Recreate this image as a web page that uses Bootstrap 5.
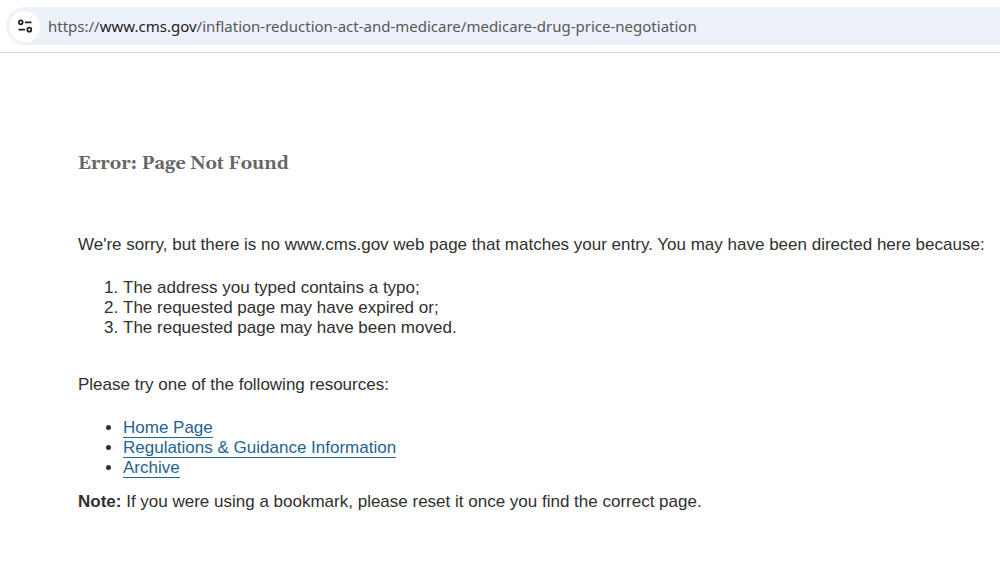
<!DOCTYPE html>
<html lang="en">
<head>
<meta charset="utf-8">
<meta name="viewport" content="width=device-width, initial-scale=1">
<title>Error: Page Not Found</title>
<link href="https://cdn.jsdelivr.net/npm/bootstrap@5.3.0/dist/css/bootstrap.min.css" rel="stylesheet">
<style>
body { font-family: "Liberation Sans", Arial, sans-serif; font-size: 17px; line-height: 20px; color: #303030; background: #fff; }
.browser-bar { padding: 7px 0 7px 6px; border-bottom: 1px solid #d8d9db; }
.address { background: #edf1fa; border-radius: 19px 0 0 19px; height: 38px; padding-left: 3px; }
.site-info { width: 31px; height: 31px; background: #fff; border: 0; }
.url { font-family: "Noto Sans", "Segoe UI", sans-serif; font-size: 15px; color: #55585c; padding-left: 8px; }
.url b { font-weight: 400; color: #1f2023; }
.message { padding: 101px 0 0 78px; }
.message h1 { font-family: Gelasio, Georgia, "DejaVu Serif", serif; font-size: 18px; line-height: 20px; font-weight: 700; color: #666; margin-bottom: 61px; }
.message p { margin-bottom: 23px; }
.message ol, .message ul { padding-left: 45px; }
.message ol { margin-bottom: 37px; }
.message ul { margin-bottom: 14px; }
.message a { color: #1f6391; text-decoration: none; border-bottom: 1px solid #1f6391; }
</style>
</head>
<body>
<header class="browser-bar">
  <div class="address d-flex align-items-center">
    <button class="site-info rounded-circle p-0 d-flex align-items-center justify-content-center" type="button" aria-label="View site information">
      <svg width="16" height="16" viewBox="0 0 16 16" fill="none" stroke="#1f2023" stroke-width="1.7"><circle cx="3.7" cy="4.3" r="2"/><path d="M8 4.3h6.5M1.5 11.7h6.5"/><circle cx="12.3" cy="11.7" r="2"/></svg>
    </button>
    <div class="url text-nowrap">https://<b>www.cms.gov</b>/inflation-reduction-act-and-medicare/medicare-drug-price-negotiation</div>
  </div>
</header>
<main class="message">
  <h1>Error: Page Not Found</h1>
  <p>We're sorry, but there is no www.cms.gov web page that matches your entry. You may have been directed here because:</p>
  <ol>
    <li>The address you typed contains a typo;</li>
    <li>The requested page may have expired or;</li>
    <li>The requested page may have been moved.</li>
  </ol>
  <p>Please try one of the following resources:</p>
  <ul>
    <li><a href="#">Home Page</a></li>
    <li><a href="#">Regulations &amp; Guidance Information</a></li>
    <li><a href="#">Archive</a></li>
  </ul>
  <p><strong>Note:</strong> If you were using a bookmark, please reset it once you find the correct page.</p>
</main>
<script src="https://cdn.jsdelivr.net/npm/bootstrap@5.3.0/dist/js/bootstrap.bundle.min.js"></script>
</body>
</html>
